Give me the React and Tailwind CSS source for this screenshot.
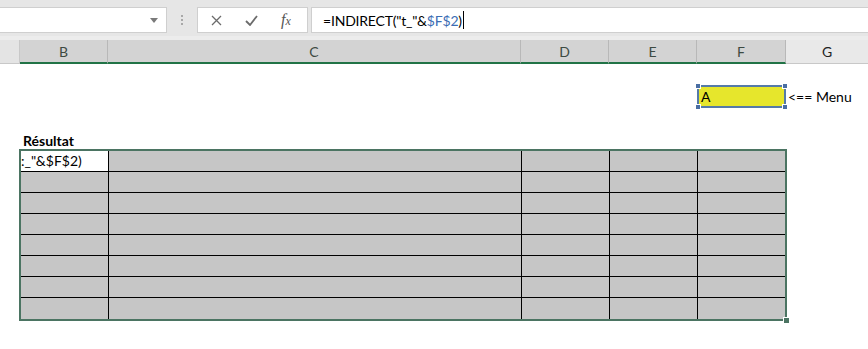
import React from 'react';

const cols = ['B', 'C', 'D', 'E', 'F'];
const widths = ['w-[88px]', 'w-[413px]', 'w-[88px]', 'w-[88px]', 'w-[89px]'];

const Handle = ({ className }) => (
  <span className={`absolute w-[6px] h-[6px] bg-[#4a6ea3] border border-white ${className}`} />
);

const App = () => {
  const rows = [0, 1, 2, 3, 4, 5, 6, 7];

  return (
    <div className="w-[868px] h-[349px] bg-white overflow-hidden font-['Lato','Open_Sans',sans-serif] text-black">
      {/* formula bar */}
      <div className="h-[36px] bg-[#e6e6e6] flex items-start pt-[7px]">
        <div className="w-[167px] h-[26px] bg-white border border-l-0 border-[#cfcfcf] flex items-center justify-end pr-[8px]">
          <svg width="8" height="5" viewBox="0 0 8 5"><path d="M0 0h8L4 5z" fill="#7a7a7a" /></svg>
        </div>
        <div className="w-[30px] h-[26px] flex flex-col items-center justify-center gap-[2px]">
          <span className="w-[2px] h-[2px] bg-[#a8a8a8]" />
          <span className="w-[2px] h-[2px] bg-[#a8a8a8]" />
          <span className="w-[2px] h-[2px] bg-[#a8a8a8]" />
        </div>
        <div className="w-[111px] h-[26px] bg-white border border-[#cfcfcf] flex items-center pl-[13px]">
          <svg width="11" height="11" viewBox="0 0 11 11"><path d="M1 1l9 9M10 1l-9 9" stroke="#6b6b6b" strokeWidth="1.3" /></svg>
          <svg className="ml-[23px]" width="13" height="11" viewBox="0 0 13 11"><path d="M1 6l4 4L12 1" stroke="#6b6b6b" strokeWidth="1.8" fill="none" /></svg>
          <span className="ml-[23px] font-['Liberation_Serif',serif] italic text-[16px] text-[#555] leading-none">f<span className="text-[12px]">x</span></span>
        </div>
        <div className="ml-[3px] flex-1 h-[26px] bg-white border border-r-0 border-[#cfcfcf] flex items-center pl-[11px] text-[14px] tracking-[-0.2px]">
          <span>=INDIRECT("t_"&amp;</span>
          <span className="text-[#3b6db4]">$F$2</span>
          <span>)</span>
          <span className="w-[1px] h-[18px] bg-black ml-[1px]" />
        </div>
      </div>
      <div className="h-[4px] bg-[#ececec]" />

      {/* column headers */}
      <div className="h-[24px] flex text-[14px]">
        <div className="w-[20px] bg-[#e4e4e4] border-r border-[#c8c8c8] border-b border-b-[#c8c8c8]" />
        {cols.map((c, i) => (
          <div key={c} className={`${widths[i]} bg-[#d3d3d3] border-r border-[#b8b8b8] border-b-2 border-b-[#217346] flex items-center justify-center text-[#3d4a42]`}>
            {c}
          </div>
        ))}
        <div className="flex-1 bg-[#e9e9e9] border-b border-[#c8c8c8] flex items-center justify-center text-[#222]">G</div>
      </div>

      {/* rows 1-4 */}
      <div className="h-[21px]" />
      <div className="h-[23px] flex items-center">
        <div className="w-[697px]" />
        <div className="relative w-[89px] h-[23px] border-2 border-[#557aa8] bg-[#e6e62c] flex items-center pl-[2px] text-[14px]">
          A
          <Handle className="-left-[4px] -top-[4px]" />
          <Handle className="-right-[4px] -top-[4px]" />
          <Handle className="-left-[4px] -bottom-[4px]" />
          <Handle className="-right-[4px] -bottom-[4px]" />
        </div>
        <div className="pl-[2px] text-[14px]">&lt;== Menu</div>
      </div>
      <div className="h-[25px]" />
      <div className="h-[16px] flex items-end pl-[23px] text-[14px] font-bold leading-[16px]">Résultat</div>

      {/* result table */}
      <div className="pl-[19px]">
        <div className="relative w-[768px] border-2 border-[#4b7462]">
          {rows.map((r) => (
            <div key={r} className={`flex h-[21px] ${r < 7 ? 'border-b border-black' : ''}`}>
              {cols.map((c, i) => (
                <div
                  key={c}
                  className={`${i === 0 ? 'w-[88px]' : widths[i]} ${i < 4 ? 'border-r border-black' : 'flex-1'} ${r === 0 && i === 0 ? 'bg-white' : 'bg-[#c6c6c6]'} overflow-hidden whitespace-nowrap text-[14px] leading-[20px]`}
                >
                  {r === 0 && i === 0 ? ':_"&$F$2)' : ''}
                </div>
              ))}
            </div>
          ))}
          <span className="absolute -right-[5px] -bottom-[5px] w-[7px] h-[7px] bg-[#4b7462] border border-white" />
        </div>
      </div>
    </div>
  );
};

export default App;
